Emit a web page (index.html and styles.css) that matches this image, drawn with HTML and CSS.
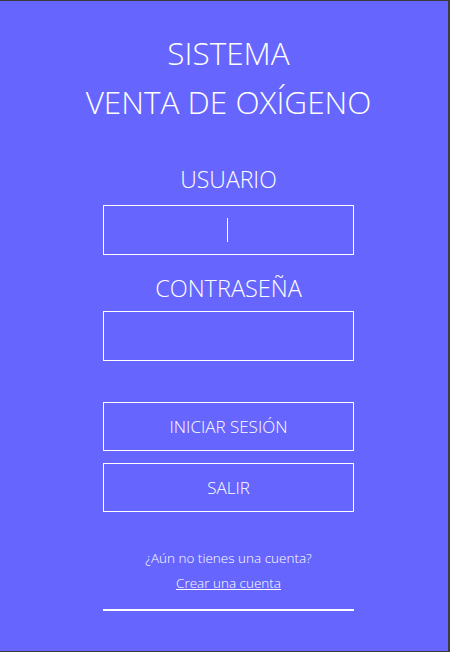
FILE: index.html
```html
<!DOCTYPE html>
<html lang="es">
<head>
<meta charset="utf-8">
<title>Sistema Venta de Oxígeno</title>
<link rel="stylesheet" href="styles.css">
</head>
<body>
<div class="screen">
  <h1 class="title">SISTEMA<br>VENTA DE OXÍGENO</h1>
  <div class="form">
    <label class="label">USUARIO</label>
    <div class="field"><span class="caret"></span></div>
    <label class="label label-pass">CONTRASEÑA</label>
    <div class="field field-pass"></div>
    <div class="btn btn-login">INICIAR SESIÓN</div>
    <div class="btn btn-exit">SALIR</div>
    <p class="question">¿Aún no tienes una cuenta?</p>
    <a class="create" href="#">Crear una cuenta</a>
    <div class="rule"></div>
  </div>
</div>
</body>
</html>
```
FILE: styles.css
```css
* { box-sizing: border-box; }
html, body { margin: 0; padding: 0; }
body {
  width: 450px;
  height: 652px;
  background: #3b3b3b;
  font-family: "Open Sans", "Noto Sans", sans-serif;
  font-weight: 300;
  color: #ffffff;
}
.screen {
  width: 450px;
  height: 652px;
  background: #6666ff;
  border-top: 1px solid #3b3b3b;
  border-right: 2px solid #3b3b3b;
  border-bottom: 1px solid #3b3b3b;
  padding-left: 9px;
  display: flex;
  flex-direction: column;
  align-items: center;
}
.title {
  margin: 27px 0 0;
  font-size: 31.5px;
  font-weight: 300;
  line-height: 49px;
  text-align: center;
  white-space: nowrap;
}
.form {
  width: 251px;
  display: flex;
  flex-direction: column;
  align-items: center;
}
.label {
  margin-top: 38px;
  font-size: 23px;
  line-height: 30px;
  white-space: nowrap;
}
.label-pass { margin-top: 18px; font-size: 23.5px; }
.field {
  margin-top: 11px;
  width: 251px;
  height: 50px;
  border: 1px solid #ffffff;
  display: flex;
  align-items: center;
  justify-content: center;
}
.field-pass { margin-top: 8px; }
.caret {
  width: 1px;
  height: 24px;
  background: #ffffff;
  margin-left: -2px;
}
.btn {
  width: 251px;
  height: 49px;
  border: 1px solid #ffffff;
  display: flex;
  align-items: center;
  justify-content: center;
  font-size: 17px;
}
.btn-login { margin-top: 41px; }
.btn-exit { margin-top: 12px; }
.question {
  margin: 36px 0 0;
  font-size: 13.5px;
  line-height: 20px;
}
.create {
  margin-top: 5px;
  font-size: 13.5px;
  line-height: 20px;
  color: #ffffff;
  text-decoration: underline;
}
.rule {
  margin-top: 16px;
  width: 251px;
  height: 2px;
  background: #ffffff;
}
```
